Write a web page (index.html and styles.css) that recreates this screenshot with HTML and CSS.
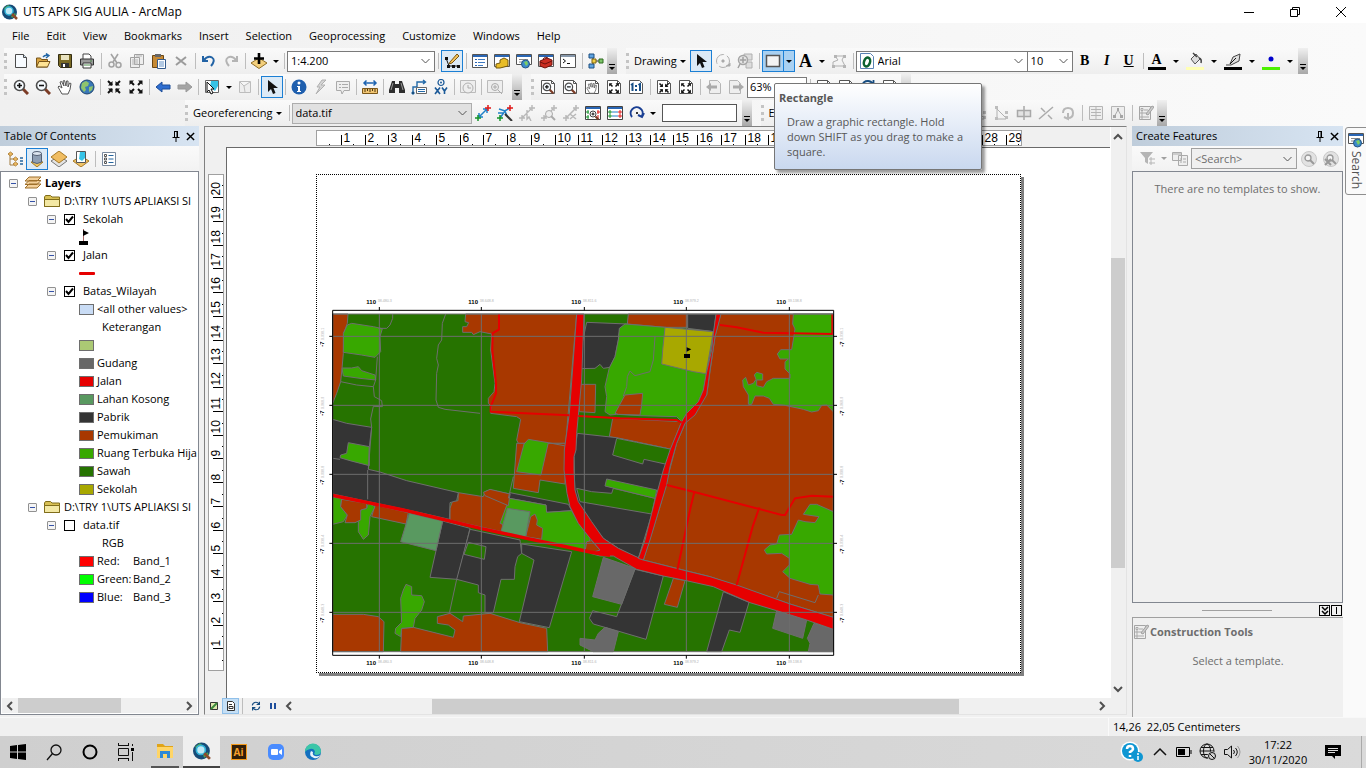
FILE: index.html
```
<!DOCTYPE html>
<html lang="en">
<head>
    <meta charset="UTF-8">
    <meta name="viewport" content="width=device-width, initial-scale=1.0">
    <title>UTS APK SIG AULIA - ArcMap</title>
    <link rel="stylesheet" href="styles.css">
</head>
<body>

    <!-- Icon sprite -->
    <svg class="sprite" aria-hidden="true">
        <symbol id="i-logo" viewBox="0 0 16 16"><circle cx="7.500" cy="8" r="7.500" fill="#174b77"/><path d="M2 4l4-3 3 2-2 3-4 1zM9 12l4-3 1 2-4 3z" fill="#4da04a"/><circle cx="7" cy="7" r="4" fill="#bfe8f5" stroke="#2fb3d8" stroke-width="1.500"/><path d="M10 10l5 5" stroke="#8d4a2a" stroke-width="2.500"/></symbol>
        <symbol id="i-new" viewBox="0 0 16 16"><path d="M2.500 1.500h8l3 3v10h-11z" fill="#f7fbff" stroke="#4a4a4a"/><path d="M10.500 1.500v3h3" fill="#cfe2f3" stroke="#4a4a4a"/></symbol>
        <symbol id="i-open" viewBox="0 0 16 16"><path d="M1.500 14V5h4l1 1.500h6V14z" fill="#d9a441" stroke="#77541a"/><path d="M1.500 14L4 8.500h11L12.500 14z" fill="#ffe394" stroke="#77541a"/><path d="M8 4q2-2.500 5-1.500M11 .500l3 2-3 2.500" fill="none" stroke="#2468a8" stroke-width="1.400"/></symbol>
        <symbol id="i-save" viewBox="0 0 16 16"><path d="M1.500 1.500h13v13h-11l-2-2z" fill="#7a6a24" stroke="#332d13"/><path d="M4 2h8v5H4z" fill="#e9e3c0"/><path d="M4 10h8v4H4z" fill="#333"/><path d="M6 11h2v3H6z" fill="#fff"/></symbol>
        <symbol id="i-print" viewBox="0 0 16 16"><path d="M4 6V1h6l2 2v3" fill="#fff" stroke="#444"/><path d="M1.500 6h13v6h-13z" fill="#999" stroke="#333"/><path d="M4 10h8v5H4z" fill="#fff" stroke="#333"/><path d="M5 12h6M11 8h2" stroke="#4b8a4b"/></symbol>
        <symbol id="i-cut" viewBox="0 0 16 16"><path d="M4 1l6 9M11 1L6 9" stroke="#a3a3a3" stroke-width="1.600" fill="none"/><circle cx="4.500" cy="11.500" r="2.500" fill="none" stroke="#a3a3a3" stroke-width="1.500"/><circle cx="11.500" cy="12" r="2.500" fill="none" stroke="#a3a3a3" stroke-width="1.500"/></symbol>
        <symbol id="i-copy" viewBox="0 0 16 16"><path d="M5.500 1.500h9v10h-9zM1.500 4.500h9v10h-9z" fill="#eee" stroke="#a0a0a0"/><path d="M3 7h6M3 9h6M3 11h6M7 3h6" stroke="#b5b5b5"/></symbol>
        <symbol id="i-paste" viewBox="0 0 16 16"><path d="M1.500 2.500h11v12h-11z" fill="#c68a35" stroke="#6b4613"/><path d="M4 1h6v3H4z" fill="#666"/><path d="M6.500 6.500h8v9h-8z" fill="#fff" stroke="#355b8c"/><path d="M8 9h5M8 11h5M8 13h5" stroke="#6793c6"/></symbol>
        <symbol id="i-delete" viewBox="0 0 16 16"><path d="M3 4l10 8M13 4L3 12" stroke="#9b9b9b" stroke-width="2"/></symbol>
        <symbol id="i-undo" viewBox="0 0 16 16"><path d="M2 3v5h5M2.500 7.500Q7 2 11 4.500T10 13" fill="none" stroke="#2263a5" stroke-width="2"/></symbol>
        <symbol id="i-redo" viewBox="0 0 16 16"><path d="M14 3v5H9M13.500 7.500Q9 2 5 4.500T6 13" fill="none" stroke="#b4b4b4" stroke-width="2"/></symbol>
        <symbol id="i-add" viewBox="0 0 16 16"><path d="M0 10l8-5 8 5-8 5.500z" fill="#f3cf7c" stroke="#8d6c25"/><path d="M8 0v11M3 5.500h10" stroke="#000" stroke-width="2.600"/></symbol>
        <symbol id="i-edit" viewBox="0 0 16 16"><path d="M2 5l3 8h9" fill="none" stroke="#111"/><path d="M1 4h3v3H1zM3 12h3v3H3zM8 12h3v3H8zM13 12h3v3h-3z" fill="#111"/><path d="M6 9l7-8 2 2-7 7-3 1z" fill="#f3c35b" stroke="#7a5412"/></symbol>
        <symbol id="i-toc" viewBox="0 0 16 16"><path d="M.500 1.500h15v13H.500z" fill="#fff" stroke="#555"/><path d="M1 2h14v2H1z" fill="#2a66b4"/><path d="M3 6.500h2M3 9.500h2M3 12.500h2" stroke="#2a66b4"/><path d="M6 6.500h7M6 9.500h7M6 12.500h5" stroke="#3d79c1"/></symbol>
        <symbol id="i-catalog" viewBox="0 0 16 16"><path d="M.500 1.500h15v12H.500z" fill="#fff" stroke="#555"/><path d="M1 2h14v2H1z" fill="#2a66b4"/><path d="M6 7l4-2 4 2v6l-8 2H2v-4l4-1z" fill="#e9bd27" stroke="#74580b"/></symbol>
        <symbol id="i-search" viewBox="0 0 16 16"><path d="M.500 1.500h15v10H.500z" fill="#fff" stroke="#555"/><path d="M1 2h14v2H1z" fill="#2a66b4"/><path d="M3 6.500h9M3 9h3" stroke="#888"/><circle cx="9.500" cy="11" r="4" fill="#3d8acb" stroke="#245685"/><path d="M8 9l3-1 1 3-2 2z" fill="#7dcf62"/></symbol>
        <symbol id="i-toolbox" viewBox="0 0 16 16"><path d="M.500 1.500h15v12H.500z" fill="#fff" stroke="#555"/><path d="M1 2h14v2H1z" fill="#2a66b4"/><path d="M2 8l7-3 5 2v5l-7 3-5-2z" fill="#cb2e22" stroke="#6e120c"/><path d="M5 6q2-3 5-1M2 9l5 2 7-3" fill="none" stroke="#6e120c"/></symbol>
        <symbol id="i-python" viewBox="0 0 16 16"><path d="M.500 1.500h15v13H.500z" fill="#fff" stroke="#555"/><path d="M1 2h14v2H1z" fill="#8697aa"/><path d="M3 6l2.500 2L3 10M7 10.500h3" fill="none" stroke="#111"/></symbol>
        <symbol id="i-model" viewBox="0 0 16 16"><path d="M5 3v10M5 8h6" stroke="#333"/><path d="M1 1h5v4H1zM1 11h5v4H1z" fill="#5ea3e0" stroke="#1d4f80"/><path d="M4 6h4v4H4z" fill="#f0cf44" stroke="#7a6211"/><path d="M11 6h4v4h-4z" fill="#7ec66a" stroke="#2f6a20"/></symbol>
        <symbol id="i-pointer" viewBox="0 0 16 16"><path d="M4 1v12l3-3 2 5 2.500-1-2-5H14z" fill="#111"/></symbol>
        <symbol id="i-rotate" viewBox="0 0 16 16"><circle cx="8" cy="8" r="6.500" fill="none" stroke="#b0b0b0" stroke-dasharray="14 3"/><path d="M7 7h2v2H7zM11 13h4v-3" fill="#aaa" stroke="#aaa"/></symbol>
        <symbol id="i-zoomsel" viewBox="0 0 16 16"><path d="M7 1h8v6H7zM9 9h6v6H9z" fill="#ddd" stroke="#b0b0b0"/><circle cx="6" cy="7" r="4.500" fill="#e5e5e5" stroke="#a5a5a5" stroke-width="1.500"/><path d="M6 4v6M3 7h6M3 11l-2 4" stroke="#a0a0a0" stroke-width="1.500"/></symbol>
        <symbol id="i-rect" viewBox="0 0 16 16"><path d="M1.500 2.500h13v11h-13z" fill="#f4f4f4" stroke="#555" stroke-width="1.500"/></symbol>
        <symbol id="i-vertex" viewBox="0 0 16 16"><path d="M2 13V9l5-2-3-4h9l-2 4 3 6z" fill="none" stroke="#b0b0b0"/><path d="M1 12h3v3H1zM3 2h3v3H3zM12 2h3v3h-3zM12 12h3v3h-3z" fill="#b5b5b5"/></symbol>
        <symbol id="i-zoomin" viewBox="0 0 16 16"><path d="M10 10l5 5" stroke="#7b3b25" stroke-width="3"/><circle cx="6.500" cy="6.500" r="5" fill="#f6fbff" stroke="#4c4c4c" stroke-width="1.600"/><path d="M6.500 4v5M4 6.500h5" stroke="#111" stroke-width="1.600"/></symbol>
        <symbol id="i-zoomout" viewBox="0 0 16 16"><path d="M10 10l5 5" stroke="#7b3b25" stroke-width="3"/><circle cx="6.500" cy="6.500" r="5" fill="#f6fbff" stroke="#4c4c4c" stroke-width="1.600"/><path d="M4 6.500h5" stroke="#111" stroke-width="1.600"/></symbol>
        <symbol id="i-hand" viewBox="0 0 16 16"><path d="M5 15L1 8l1-1 3 2-2-6 1.500-.500L7 7 6 2l1.500-.500L9 7l.500-5H11v6l1.500-4 1.500.500-1 6-2 4.500z" fill="#fff" stroke="#555"/></symbol>
        <symbol id="i-globe" viewBox="0 0 16 16"><circle cx="8" cy="8" r="7" fill="#3978b8" stroke="#1e436c"/><path d="M3 4l4-2 3 2-1 3-3 1 1 3-2 2-3-4zM10 8l4-1-1 4-3 2z" fill="#8fc46c"/></symbol>
        <symbol id="i-shrink" viewBox="0 0 16 16"><path d="M2 2l4 4M14 2l-4 4M2 14l4-4M14 14l-4-4" stroke="#111" stroke-width="2"/><path d="M2 6.500h4.500V2zM9.500 2v4.500H14zM6.500 14V9.500H2zM14 9.500H9.500V14z" fill="#111"/></symbol>
        <symbol id="i-grow" viewBox="0 0 16 16"><path d="M3 3l3 3M13 3l-3 3M3 13l3-3M13 13l-3-3" stroke="#111" stroke-width="2"/><path d="M1.500 6V1.500H6zM10 1.500h4.500V6zM1.500 10v4.500H6zM14.500 10v4.500H10z" fill="#111"/></symbol>
        <symbol id="i-back" viewBox="0 0 16 16"><path d="M1 8l6-5v3h8v4H7v3z" fill="#2f6ed0" stroke="#1c4c98"/></symbol>
        <symbol id="i-fwd" viewBox="0 0 16 16"><path d="M15 8L9 3v3H1v4h8v3z" fill="#a5a5a5" stroke="#999"/></symbol>
        <symbol id="i-select" viewBox="0 0 16 16"><path d="M1.500 1.500h13v12h-13z" fill="#fff" stroke="#666"/><path d="M7 2h7v5l-3 5-5-4z" fill="#37c3e6"/><path d="M3 3v10l2-2 2 4 2-1-2-4h3z" fill="#fff" stroke="#111"/></symbol>
        <symbol id="i-clearsel" viewBox="0 0 16 16"><path d="M2.500 2.500h11v11h-11zM3 3l4 4 6-4M7 7l1 6" fill="#eee" stroke="#bdbdbd"/></symbol>
        <symbol id="i-info" viewBox="0 0 16 16"><circle cx="8" cy="8" r="7.500" fill="#1f5fae"/><circle cx="8" cy="4" r="1.500" fill="#fff"/><path d="M6 7h3v5h1v1H6v-1h1V8H6z" fill="#fff"/></symbol>
        <symbol id="i-bolt" viewBox="0 0 16 16"><path d="M9 1L4 8h3l-4 7 9-9H8l5-5z" fill="#d5d5d5" stroke="#b0b0b0"/></symbol>
        <symbol id="i-note" viewBox="0 0 16 16"><path d="M1.500 2.500h13v9H9L7 15l-1-3.500H1.500z" fill="#eee" stroke="#aaa"/><path d="M4 5.500h2M7 5.500h6M4 8.500h2M7 8.500h6" stroke="#aaa"/></symbol>
        <symbol id="i-measure" viewBox="0 0 16 16"><path d="M2 4h12M4.500 1.500L2 4l2.500 2.500M11.500 1.500L14 4l-2.500 2.500" fill="none" stroke="#1e63b0" stroke-width="1.500"/><path d="M.500 9.500h15v5H.500z" fill="#f1c572" stroke="#7b571a"/><path d="M3 10v3M5.500 10v2M8 10v3M10.500 10v2M13 10v3" stroke="#4d360d"/></symbol>
        <symbol id="i-find" viewBox="0 0 16 16"><path d="M3 2h3v3h4V2h3l3 9v3H10V9H6v5H0v-3z" fill="#2e2e2e"/><path d="M4 4l-2 7M12 4l2 7" stroke="#999"/></symbol>
        <symbol id="i-route" viewBox="0 0 16 16"><path d="M2 15V8h4V3h8M12 1l2.500 2L12 5" fill="none" stroke="#2269a8" stroke-width="1.400"/><path d="M5.500 8.500h10v6h-10z" fill="#fff" stroke="#666"/><path d="M7 10.500h7M7 12.500h7M1 13h2v2H1z" stroke="#2269a8"/></symbol>
        <symbol id="i-xy" viewBox="0 0 16 16"><circle cx="8" cy="3.500" r="3" fill="none" stroke="#1c5a98" stroke-width="1.200"/><circle cx="8" cy="3.500" r="1" fill="#1c5a98"/><path d="M2 8.500l5 6.500M7 8.500L2 15M9 8.500l2.500 3.500L14 8.500M11.500 12v3" stroke="#1c5a98" stroke-width="1.600" fill="none"/></symbol>
        <symbol id="i-clock" viewBox="0 0 16 16"><path d="M.500 1.500h15v12H.500z" fill="#eee" stroke="#bbb"/><circle cx="8" cy="9" r="5" fill="#eee" stroke="#b0b0b0"/><path d="M8 6v3h3" fill="none" stroke="#aaa"/></symbol>
        <symbol id="i-viewer" viewBox="0 0 16 16"><path d="M.500 1.500h15v12H.500z" fill="#eee" stroke="#bbb"/><circle cx="8" cy="8" r="3.500" fill="#eee" stroke="#aaa"/><path d="M8 6v4M6 8h4M11 11l4 4" stroke="#aaa"/></symbol>
        <symbol id="i-page" viewBox="0 0 16 16"><path d="M1.500 1.500h10l3 3v10h-13z" fill="#fff" stroke="#555"/><path d="M11.500 1.500v3h3" fill="none" stroke="#555"/></symbol>
        <symbol id="i-pageprev" viewBox="0 0 16 16"><path d="M3.500 1.500h8l3 3v10h-11z" fill="#eee" stroke="#b5b5b5"/><path d="M0 8l5-4v2.500h6v3H5V12z" fill="#aaa"/></symbol>
        <symbol id="i-pagenext" viewBox="0 0 16 16"><path d="M1.500 1.500h8l3 3v10h-11z" fill="#eee" stroke="#b5b5b5"/><path d="M16 8l-5-4v2.500H5v3h6V12z" fill="#aaa"/></symbol>
        <symbol id="i-11" viewBox="0 0 16 16"><path d="M1.500 1.500h10l3 3v10h-13z" fill="#fff" stroke="#555"/><path d="M3 6l1.500-1v7M10.500 6L12 5v7" fill="none" stroke="#174f88" stroke-width="2"/><path d="M7 6h2v2H7zM7 10h2v2H7z" fill="#174f88"/></symbol>
        <symbol id="i-refresh" viewBox="0 0 16 16"><path d="M2 7q1-5 6-5 3 0 5 3M14 9q-1 5-6 5-3 0-5-3M13.500 1v4.500H9M2.500 15v-4.500H7" fill="none" stroke="#164c80" stroke-width="1.800"/></symbol>
        <symbol id="i-link" viewBox="0 0 16 16"><path d="M4 12l8-8M8 4h4v4M4 8v4h4" fill="none" stroke="#2180c8" stroke-width="1.500"/><path d="M13 0v6M10 3h6" stroke="#e01818" stroke-width="1.500"/><path d="M3 10v6M0 13h6" stroke="#14942a" stroke-width="1.500"/></symbol>
        <symbol id="i-autolink" viewBox="0 0 16 16"><path d="M2 4l6 2 5-3M3 13l5-7 2 5M1 8h5" fill="none" stroke="#2180c8" stroke-width="1.500"/><path d="M8 9l7 7" stroke="#333" stroke-width="2"/><path d="M13 0v6M10 3h6" stroke="#e01818" stroke-width="1.500"/><path d="M3 10v6M0 13h6" stroke="#14942a" stroke-width="1.500"/></symbol>
        <symbol id="i-linkoff" viewBox="0 0 16 16"><path d="M3 13l9-9M13 0v6M10 3h6M3 10v6M0 13h6M8 5v9l2-2 2 4" fill="none" stroke="#b8b8b8" stroke-width="1.400"/></symbol>
        <symbol id="i-linkzoom" viewBox="0 0 16 16"><path d="M3 13l9-9M13 0v6M10 3h6M3 10v6M0 13h6" stroke="#b8b8b8" stroke-width="1.400"/><circle cx="8" cy="9" r="3.500" fill="#eee" stroke="#aaa"/><path d="M10 11l4 4" stroke="#aaa" stroke-width="2"/></symbol>
        <symbol id="i-linkdel" viewBox="0 0 16 16"><path d="M3 13l9-9M13 0v6M10 3h6M3 10v6M0 13h6M7 9l6 5M13 9l-6 5" stroke="#b8b8b8" stroke-width="1.500"/></symbol>
        <symbol id="i-table" viewBox="0 0 16 16"><path d="M.500 1.500h15v13H.500z" fill="#fff" stroke="#444"/><path d="M1 2h14v2H1z" fill="#2a66b4"/><path d="M5 7h6M5 11h6" stroke="#2180c8"/><path d="M3 5v4M1 7h4M3 9v4M1 11h4" stroke="#14942a"/><path d="M13 5v4M11 7h4M13 9v4M11 11h4" stroke="#e01818"/></symbol>
        <symbol id="i-tablezoom" viewBox="0 0 16 16"><path d="M.500 1.500h15v13H.500z" fill="#fff" stroke="#444"/><path d="M1 2h14v2H1z" fill="#2a66b4"/><path d="M3 5v4M1 7h3M3 10v4M1 12h3" stroke="#14942a"/><path d="M13 5v4M12 7h3M13 10v3" stroke="#e01818"/><circle cx="8" cy="9" r="3" fill="#fff" stroke="#444"/><path d="M8 7.500v3M6.500 9h3" stroke="#111"/><path d="M10.500 11.500l3 3" stroke="#7b3b25" stroke-width="2"/></symbol>
        <symbol id="i-spin" viewBox="0 0 16 16"><path d="M3 12A6 6 0 1 1 13 11M15 8l-2 4-4-2" fill="none" stroke="#1a3f93" stroke-width="2"/><path d="M7 7h2v2H7z" fill="#333"/></symbol>
        <symbol id="i-trace" viewBox="0 0 16 16"><path d="M3 1v13h9M3 4l9 9" fill="none" stroke="#b0b0b0"/><path d="M1 1h3v3H1zM1 12h3v3H1zM11 6h3v3h-3zM11 11h3v3h-3z" fill="#bdbdbd"/></symbol>
        <symbol id="i-split" viewBox="0 0 16 16"><path d="M1.500 5.500h13v6h-13zM8 1v14" fill="#e2e2e2" stroke="#a8a8a8" stroke-width="1.500"/></symbol>
        <symbol id="i-cross" viewBox="0 0 16 16"><path d="M1 14L15 2M3 3l4 4M10 10l4 4" stroke="#ababab" stroke-width="1.500"/></symbol>
        <symbol id="i-turn" viewBox="0 0 16 16"><path d="M3 8q0-5 5-5t5 5-5 5M8 8v6l-4-2" fill="none" stroke="#b8b8b8" stroke-width="2"/></symbol>
        <symbol id="i-attr" viewBox="0 0 16 16"><path d="M1.500 1.500h13v13h-13zM8 2v12M3 4.500h10M3 7.500h10M3 10.500h10" fill="#eee" stroke="#b5b5b5"/></symbol>
        <symbol id="i-sketch" viewBox="0 0 16 16"><path d="M1.500 1.500h13v13h-13z" fill="#eee" stroke="#b5b5b5"/><path d="M4 12l4-7 4 7" fill="none" stroke="#aaa"/><path d="M7 3h2v3H7zM3 10h3v3H3zM10 10h3v3h-3z" fill="#a5a5a5"/></symbol>
        <symbol id="i-template" viewBox="0 0 16 16"><path d="M1.500 1.500h11v13h-11z" fill="#eee" stroke="#a5a5a5"/><path d="M3 3.500h2v2H3zM3 7h2v2H3zM3 11h2v2H3zM6 5h4M6 8h3M6 12h5" fill="none" stroke="#aaa"/><path d="M8 9l6-8 2 1-6 8z" fill="#ccc" stroke="#a0a0a0"/></symbol>
        <symbol id="i-style" viewBox="0 0 16 16"><path d="M1.500.500h10l3 3v12h-13z" fill="#fff" stroke="#5b83b4"/><ellipse cx="8" cy="9" rx="3" ry="4.500" fill="none" stroke="#0c6230" stroke-width="2.500" transform="rotate(18 8 9)"/></symbol>
        <symbol id="i-bucket" viewBox="0 0 16 16"><path d="M4 7l5-5 4 5-5 5z" fill="#ddd" stroke="#555"/><path d="M6 1l4 4M12 6q3 1 2 5" fill="none" stroke="#444" stroke-width="1.500"/></symbol>
        <symbol id="i-pen" viewBox="0 0 16 16"><path d="M1 13h5l8-4 1-7-7 3-3 7" fill="#ddd" stroke="#444"/><path d="M5 12l6-6" stroke="#111"/></symbol>
        <symbol id="i-source" viewBox="0 0 16 16"><path d="M3 3v11h5M3 8h5" fill="none" stroke="#a07b3f"/><path d="M1 3l2.500-2L6 3 3.500 5zM6 8l2.500-2L11 8l-2.500 2zM6 13l2.500-2 2.500 2-2.500 2z" fill="#edb95d" stroke="#b28541"/><path d="M13 7h3M13 10h3M13 13h3" stroke="#25659e" stroke-width="1.500"/></symbol>
        <symbol id="i-db" viewBox="0 0 16 16"><path d="M2 11h12l-6 5z" fill="#efc45e" stroke="#a07a29"/><path d="M3.500 2v9q4.500 3 9 0V2" fill="#8e9fb4" stroke="#536074"/><ellipse cx="8" cy="2.500" rx="4.500" ry="2" fill="#dce5ef" stroke="#536074"/></symbol>
        <symbol id="i-vis" viewBox="0 0 16 16"><path d="M0 10l8-5 8 5-8 6z" fill="#e3e3e3" stroke="#777"/><path d="M0 6l8-6 8 6-8 6z" fill="#f0bd62" stroke="#a77a27"/></symbol>
        <symbol id="i-bysel" viewBox="0 0 16 16"><path d="M0 10l8-5 8 5-8 6z" fill="#f0c468" stroke="#a77a27"/><path d="M3.500.500h9v11h-9z" fill="#fff" stroke="#555"/><path d="M7 1h5v6l-3 3-3-2z" fill="#37c3e6"/></symbol>
        <symbol id="i-options" viewBox="0 0 16 16"><path d="M1.500 1.500h13v13h-13z" fill="#fff" stroke="#7a8ba0"/><path d="M3.500 3.500h2v2h-2zM3.500 7h2v2h-2zM3.500 10.500h2v2h-2z" fill="none" stroke="#555"/><path d="M7.500 4.500h5M7.500 8h5M7.500 11.500h5" stroke="#25659e"/></symbol>
        <symbol id="i-layers" viewBox="0 0 16 16"><path d="M0 13l4-4h12l-4 4zM0 9.500l4-4h12l-4 4zM0 6l4-4h12l-4 4z" fill="#f2cf9a" stroke="#9d6f2b"/></symbol>
        <symbol id="i-folder" viewBox="0 0 16 16"><path d="M.500 13.500V4l1-1.500h5L8 4h7.500v9.500z" fill="#d8c055" stroke="#806d1a"/><path d="M.500 13.500v-7h15v7z" fill="#f3e8a4" stroke="#806d1a"/></symbol>
        <symbol id="i-filter" viewBox="0 0 16 16"><path d="M1 1h13L9 7v6l-3-2V7z" fill="#b5b5b5"/><path d="M11 7h2v2h-2zM11 11h2v2h-2zM14 8h2M14 12h2" stroke="#b5b5b5" fill="none"/></symbol>
        <symbol id="i-organize" viewBox="0 0 16 16"><path d="M.500 1.500h9v8h-9zM6.500 4.500h9v10h-9z" fill="#eee" stroke="#aaa"/><path d="M1 3h8M8 8h2M11 8h3M8 11h2M11 11h3" stroke="#aaa"/></symbol>
        <symbol id="i-find2" viewBox="0 0 16 16"><circle cx="8" cy="8" r="7.500" fill="#e2e2e2" stroke="#c8c8c8"/><circle cx="7" cy="7" r="3" fill="#f5f5f5" stroke="#999" stroke-width="1.300"/><path d="M9 9l4 4" stroke="#999" stroke-width="2"/></symbol>
        <symbol id="i-pin" viewBox="0 0 8 12"><path d="M2.500 1v6M2.500 1.500h3M5 1v6M.500 7.500h7M4 8v4" fill="none" stroke="#000"/><path d="M5 1h1v6H5z"/></symbol>
        <symbol id="i-x" viewBox="0 0 10 10"><path d="M1 1l8 8M9 1L1 9" stroke="currentColor" stroke-width="1.600"/></symbol>
        <symbol id="i-left" viewBox="0 0 10 10"><path d="M7 1L3 5l4 4" fill="none" stroke="#505050" stroke-width="2"/></symbol>
        <symbol id="i-right" viewBox="0 0 10 10"><path d="M3 1l4 4-4 4" fill="none" stroke="#505050" stroke-width="2"/></symbol>
        <symbol id="i-up" viewBox="0 0 10 10"><path d="M1 7l4-4 4 4" fill="none" stroke="#505050" stroke-width="2"/></symbol>
        <symbol id="i-down" viewBox="0 0 10 10"><path d="M1 3l4 4 4-4" fill="none" stroke="#505050" stroke-width="2"/></symbol>
    </svg>

    <!-- Title bar -->
    <header class="title-bar">
        <svg class="icon"><use href="#i-logo"/></svg>
        <h1>UTS APK SIG AULIA - ArcMap</h1>
        <div class="window-buttons">
            <button aria-label="Minimize"><svg width="12" height="12"><path d="M1 6.500h10" stroke="#000"/></svg></button>
            <button aria-label="Restore"><svg width="12" height="12"><path d="M1.500 3.500h7v7h-7zM3.500 3V1.500h7v7H9" fill="none" stroke="#000"/></svg></button>
            <button aria-label="Close"><svg width="12" height="12"><path d="M1 1l10 10M11 1L1 11" stroke="#000"/></svg></button>
        </div>
    </header>

    <nav class="menu-bar">
        <button>File</button><button>Edit</button><button>View</button><button>Bookmarks</button><button>Insert</button><button>Selection</button><button>Geoprocessing</button><button>Customize</button><button>Windows</button><button>Help</button>
    </nav>

    <!-- Toolbars -->
    <div class="toolbars">
        <div class="toolbar-row">
            <div class="toolbar">
                <span class="grip"></span>
                <button class="tool" aria-label="New"><svg class="icon"><use href="#i-new"/></svg></button>
                <button class="tool" aria-label="Open"><svg class="icon"><use href="#i-open"/></svg></button>
                <button class="tool" aria-label="Save"><svg class="icon"><use href="#i-save"/></svg></button>
                <button class="tool" aria-label="Print"><svg class="icon"><use href="#i-print"/></svg></button>
                <span class="sep"></span>
                <button class="tool" aria-label="Cut"><svg class="icon"><use href="#i-cut"/></svg></button>
                <button class="tool" aria-label="Copy"><svg class="icon"><use href="#i-copy"/></svg></button>
                <button class="tool" aria-label="Paste"><svg class="icon"><use href="#i-paste"/></svg></button>
                <button class="tool" aria-label="Delete"><svg class="icon"><use href="#i-delete"/></svg></button>
                <span class="sep"></span>
                <button class="tool" aria-label="Undo"><svg class="icon"><use href="#i-undo"/></svg></button>
                <button class="tool" aria-label="Redo"><svg class="icon"><use href="#i-redo"/></svg></button>
                <span class="sep"></span>
                <button class="tool" aria-label="Add Data"><svg class="icon"><use href="#i-add"/></svg></button>
                <button class="drop" aria-label="Add Data options"></button>
                <span class="sep"></span>
                <select class="combo scale" aria-label="Map scale"><option>1:4.200</option></select>
                <span class="sep"></span>
                <button class="tool active" aria-label="Editor Toolbar"><svg class="icon"><use href="#i-edit"/></svg></button>
                <span class="sep"></span>
                <button class="tool" aria-label="Table Of Contents"><svg class="icon"><use href="#i-toc"/></svg></button>
                <button class="tool" aria-label="Catalog"><svg class="icon"><use href="#i-catalog"/></svg></button>
                <button class="tool" aria-label="Search"><svg class="icon"><use href="#i-search"/></svg></button>
                <button class="tool" aria-label="ArcToolbox"><svg class="icon"><use href="#i-toolbox"/></svg></button>
                <button class="tool" aria-label="Python"><svg class="icon"><use href="#i-python"/></svg></button>
                <span class="sep"></span>
                <button class="tool" aria-label="ModelBuilder"><svg class="icon"><use href="#i-model"/></svg></button>
                <button class="overflow" aria-label="Toolbar options"></button>
            </div>
            <div class="toolbar">
                <span class="grip"></span>
                <button class="text-tool">Drawing</button>
                <button class="tool active" aria-label="Select Elements"><svg class="icon"><use href="#i-pointer"/></svg></button>
                <button class="tool" aria-label="Rotate"><svg class="icon"><use href="#i-rotate"/></svg></button>
                <button class="tool" aria-label="Zoom To Selected"><svg class="icon"><use href="#i-zoomsel"/></svg></button>
                <span class="sep"></span>
                <button class="tool active pressed" aria-label="Rectangle"><svg class="icon"><use href="#i-rect"/></svg></button>
                <button class="drop active pressed" aria-label="Shapes"></button>
                <button class="tool serif">A</button>
                <button class="drop" aria-label="Text options"></button>
                <button class="tool" aria-label="Edit Vertices"><svg class="icon"><use href="#i-vertex"/></svg></button>
                <span class="sep"></span>
                <div class="font-box">
                    <svg class="icon"><use href="#i-style"/></svg>
                    <select class="combo" aria-label="Font"><option>Arial</option></select>
                </div>
                <select class="combo size" aria-label="Font size"><option>10</option></select>
                <button class="tool letter">B</button>
                <button class="tool letter italic">I</button>
                <button class="tool letter underline">U</button>
                <span class="sep"></span>
                <button class="tool color black">A</button>
                <button class="drop wide" aria-label="Font color"></button>
                <button class="tool color yellow" aria-label="Fill color"><svg class="icon"><use href="#i-bucket"/></svg></button>
                <button class="drop wide" aria-label="Fill colors"></button>
                <button class="tool color black" aria-label="Line color"><svg class="icon"><use href="#i-pen"/></svg></button>
                <button class="drop wide" aria-label="Line colors"></button>
                <button class="tool color green" aria-label="Marker color"><svg class="icon" viewBox="0 0 16 16"><circle cx="8" cy="7" r="2.500" fill="#00c"/></svg></button>
                <button class="drop wide" aria-label="Marker colors"></button>
                <button class="overflow" aria-label="Toolbar options"></button>
            </div>
        </div>

        <div class="toolbar-row">
            <div class="toolbar tools">
                <span class="grip"></span>
                <button class="tool" aria-label="Zoom In"><svg class="icon"><use href="#i-zoomin"/></svg></button>
                <button class="tool" aria-label="Zoom Out"><svg class="icon"><use href="#i-zoomout"/></svg></button>
                <button class="tool" aria-label="Pan"><svg class="icon"><use href="#i-hand"/></svg></button>
                <button class="tool" aria-label="Full Extent"><svg class="icon"><use href="#i-globe"/></svg></button>
                <span class="sep"></span>
                <button class="tool" aria-label="Fixed Zoom In"><svg class="icon"><use href="#i-shrink"/></svg></button>
                <button class="tool" aria-label="Fixed Zoom Out"><svg class="icon"><use href="#i-grow"/></svg></button>
                <span class="sep"></span>
                <button class="tool" aria-label="Back"><svg class="icon"><use href="#i-back"/></svg></button>
                <button class="tool" aria-label="Forward"><svg class="icon"><use href="#i-fwd"/></svg></button>
                <span class="sep"></span>
                <button class="tool" aria-label="Select Features"><svg class="icon"><use href="#i-select"/></svg></button>
                <button class="drop" aria-label="Select options"></button>
                <button class="tool" aria-label="Clear Selection"><svg class="icon"><use href="#i-clearsel"/></svg></button>
                <span class="sep"></span>
                <button class="tool active" aria-label="Select Elements"><svg class="icon"><use href="#i-pointer"/></svg></button>
                <span class="sep"></span>
                <button class="tool" aria-label="Identify"><svg class="icon"><use href="#i-info"/></svg></button>
                <button class="tool" aria-label="Hyperlink"><svg class="icon"><use href="#i-bolt"/></svg></button>
                <button class="tool" aria-label="HTML Popup"><svg class="icon"><use href="#i-note"/></svg></button>
                <span class="sep"></span>
                <button class="tool" aria-label="Measure"><svg class="icon"><use href="#i-measure"/></svg></button>
                <span class="sep"></span>
                <button class="tool" aria-label="Find"><svg class="icon"><use href="#i-find"/></svg></button>
                <button class="tool" aria-label="Find Route"><svg class="icon"><use href="#i-route"/></svg></button>
                <button class="tool" aria-label="Go To XY"><svg class="icon"><use href="#i-xy"/></svg></button>
                <span class="sep"></span>
                <button class="tool" aria-label="Time Slider"><svg class="icon"><use href="#i-clock"/></svg></button>
                <span class="sep"></span>
                <button class="tool" aria-label="Viewer"><svg class="icon"><use href="#i-viewer"/></svg></button>
                <button class="overflow" aria-label="Toolbar options"></button>
            </div>
            <div class="toolbar">
                <span class="grip"></span>
                <button class="tool page" aria-label="Layout Zoom In"><svg class="icon"><use href="#i-page"/><use href="#i-zoomin"/></svg></button>
                <button class="tool page" aria-label="Layout Zoom Out"><svg class="icon"><use href="#i-page"/><use href="#i-zoomout"/></svg></button>
                <button class="tool page" aria-label="Layout Pan"><svg class="icon"><use href="#i-page"/><use href="#i-hand"/></svg></button>
                <button class="tool page" aria-label="Whole Page"><svg class="icon"><use href="#i-page"/><use href="#i-grow"/></svg></button>
                <button class="tool page" aria-label="Zoom 100%"><svg class="icon"><use href="#i-11"/></svg></button>
                <span class="sep"></span>
                <button class="tool page" aria-label="Page Fixed Zoom In"><svg class="icon"><use href="#i-page"/><use href="#i-shrink"/></svg></button>
                <button class="tool page" aria-label="Page Fixed Zoom Out"><svg class="icon"><use href="#i-page"/><use href="#i-grow"/></svg></button>
                <span class="sep"></span>
                <button class="tool" aria-label="Previous Page Extent"><svg class="icon"><use href="#i-pageprev"/></svg></button>
                <button class="tool" aria-label="Next Page Extent"><svg class="icon"><use href="#i-pagenext"/></svg></button>
                <select class="combo percent" aria-label="Page zoom"><option>63%</option></select>
                <span class="sep"></span>
                <button class="tool" aria-label="Draft Mode"><svg class="icon"><use href="#i-page"/></svg></button>
                <button class="tool" aria-label="Focus Data Frame"><svg class="icon"><use href="#i-page"/></svg></button>
                <button class="tool" aria-label="Change Layout"><svg class="icon"><use href="#i-refresh"/></svg></button>
                <button class="tool" aria-label="Data Driven Pages"><svg class="icon"><use href="#i-page"/></svg></button>
                <button class="overflow" aria-label="Toolbar options"></button>
            </div>
        </div>

        <div class="toolbar-row georef-row">
            <div class="toolbar">
                <span class="grip"></span>
                <button class="text-tool">Georeferencing</button>
                <span class="sep"></span>
                <select class="combo raster" aria-label="Georeferenced layer"><option>data.tif</option></select>
                <button class="tool" aria-label="Add Control Points"><svg class="icon"><use href="#i-link"/></svg></button>
                <button class="tool" aria-label="Auto Registration"><svg class="icon"><use href="#i-autolink"/></svg></button>
                <button class="tool" aria-label="Select Link"><svg class="icon"><use href="#i-linkoff"/></svg></button>
                <button class="tool" aria-label="Zoom To Link"><svg class="icon"><use href="#i-linkzoom"/></svg></button>
                <button class="tool" aria-label="Delete Link"><svg class="icon"><use href="#i-linkdel"/></svg></button>
                <button class="tool" aria-label="Viewer"><svg class="icon"><use href="#i-tablezoom"/></svg></button>
                <button class="tool" aria-label="View Link Table"><svg class="icon"><use href="#i-table"/></svg></button>
                <button class="tool" aria-label="Rotate"><svg class="icon"><use href="#i-spin"/></svg></button>
                <button class="drop" aria-label="Rotate options"></button>
                <input class="angle" type="text" aria-label="Rotation">
                <button class="overflow" aria-label="Toolbar options"></button>
            </div>
            <div class="toolbar">
                <span class="grip"></span>
                <button class="text-tool editor">Editor</button>
                <button class="tool" aria-label="Trace"><svg class="icon"><use href="#i-trace"/></svg></button>
                <button class="tool" aria-label="Reshape"><svg class="icon"><use href="#i-trace"/></svg></button>
                <button class="tool" aria-label="Cut Polygons"><svg class="icon"><use href="#i-split"/></svg></button>
                <button class="tool" aria-label="Split"><svg class="icon"><use href="#i-cross"/></svg></button>
                <button class="tool" aria-label="Rotate"><svg class="icon"><use href="#i-turn"/></svg></button>
                <span class="sep"></span>
                <button class="tool" aria-label="Attributes"><svg class="icon"><use href="#i-attr"/></svg></button>
                <button class="tool" aria-label="Sketch Properties"><svg class="icon"><use href="#i-sketch"/></svg></button>
                <span class="sep"></span>
                <button class="tool" aria-label="Create Features"><svg class="icon"><use href="#i-template"/></svg></button>
                <button class="overflow" aria-label="Toolbar options"></button>
            </div>
        </div>
    </div>

    <main class="workspace">
        <!-- Table of contents -->
        <aside class="toc">
            <div class="panel-title">
                <h2>Table Of Contents</h2>
                <button aria-label="Auto hide"><svg width="8" height="12"><use href="#i-pin"/></svg></button>
                <button aria-label="Close"><svg width="9" height="9"><use href="#i-x"/></svg></button>
            </div>
            <div class="panel-tools">
                <button class="tool" aria-label="List By Drawing Order"><svg class="icon"><use href="#i-source"/></svg></button>
                <button class="tool active" aria-label="List By Source"><svg class="icon"><use href="#i-db"/></svg></button>
                <button class="tool" aria-label="List By Visibility"><svg class="icon"><use href="#i-vis"/></svg></button>
                <button class="tool" aria-label="List By Selection"><svg class="icon"><use href="#i-bysel"/></svg></button>
                <span class="sep"></span>
                <button class="tool" aria-label="Options"><svg class="icon"><use href="#i-options"/></svg></button>
            </div>
            <div class="tree-box">
                <ul class="tree">
                    <li class="level-0"><button class="minus" aria-label="Collapse"></button><svg class="icon"><use href="#i-layers"/></svg><b>Layers</b></li>
                    <li class="level-1"><button class="minus" aria-label="Collapse"></button><svg class="icon"><use href="#i-folder"/></svg><span>D:\TRY 1\UTS APLIAKSI SI</span></li>
                    <li class="level-2"><button class="minus" aria-label="Collapse"></button><input type="checkbox" id="l1" checked><label for="l1">Sekolah</label></li>
                    <li class="level-3"><svg width="14" height="16"><path d="M4.500 0v13" stroke="#a66"/><path d="M4 1l6 3-6 3zM0 12h9v4H0z"/></svg></li>
                    <li class="level-2"><button class="minus" aria-label="Collapse"></button><input type="checkbox" id="l2" checked><label for="l2">Jalan</label></li>
                    <li class="level-3"><span class="line-symbol"></span></li>
                    <li class="level-2"><button class="minus" aria-label="Collapse"></button><input type="checkbox" id="l3" checked><label for="l3">Batas_Wilayah</label></li>
                    <li class="level-3"><i class="swatch other"></i>&lt;all other values&gt;</li>
                    <li class="level-4">Keterangan</li>
                    <li class="level-3"><i class="swatch blank"></i></li>
                    <li class="level-3"><i class="swatch gudang"></i>Gudang</li>
                    <li class="level-3"><i class="swatch jalan"></i>Jalan</li>
                    <li class="level-3"><i class="swatch lahan"></i>Lahan Kosong</li>
                    <li class="level-3"><i class="swatch pabrik"></i>Pabrik</li>
                    <li class="level-3"><i class="swatch pemukiman"></i>Pemukiman</li>
                    <li class="level-3"><i class="swatch rth"></i>Ruang Terbuka Hija</li>
                    <li class="level-3"><i class="swatch sawah"></i>Sawah</li>
                    <li class="level-3"><i class="swatch sekolah"></i>Sekolah</li>
                    <li class="level-1"><button class="minus" aria-label="Collapse"></button><svg class="icon"><use href="#i-folder"/></svg><span>D:\TRY 1\UTS APLIAKSI SI</span></li>
                    <li class="level-2"><button class="minus" aria-label="Collapse"></button><input type="checkbox" id="l4"><label for="l4">data.tif</label></li>
                    <li class="level-4">RGB</li>
                    <li class="level-3"><i class="swatch red"></i><span class="band">Red:</span>Band_1</li>
                    <li class="level-3"><i class="swatch lime"></i><span class="band">Green:</span>Band_2</li>
                    <li class="level-3"><i class="swatch blue"></i><span class="band">Blue:</span>Band_3</li>
                </ul>
                <div class="h-scroll">
                    <button aria-label="Scroll left"><svg width="10" height="10"><use href="#i-left"/></svg></button>
                    <div class="track"><div class="thumb"></div></div>
                    <button aria-label="Scroll right"><svg width="10" height="10"><use href="#i-right"/></svg></button>
                </div>
            </div>
        </aside>

        <!-- Layout view -->
        <section class="layout-view">
            <div class="ruler-top"><svg id="rulerTop" width="706" height="16"></svg></div>
            <div class="ruler-left"><svg id="rulerLeft" width="16" height="497"></svg></div>
            <div class="canvas">
                <div class="paper">
                    <svg class="map" viewBox="0 0 1590 1140">
                        <rect x="38" y="72" width="1502" height="1013" fill="#267300"/>
                        <g stroke="#6e6e6e" stroke-width="3" stroke-linejoin="round">
                            <g class="pemukiman">
                                <path d="M38 72H84L82 100 71 130 70 190 66 235 62 275 50 310 38 340z"/>
                                <path d="M437 72l-2 23 11 3-6 12h-12v17h27l5 7 20-9 35 7-3 48 13 100-3 25-17 20v15l10 10-3 20 78 10 12 8-12 62 5 10H737L770 72z"/>
                                <path d="M590 460H737L735 582 660 570 655 608 580 595z"/>
                                <path d="M415 608l75 12 5-15 15-5 60 12-25 113-155-35v-35l7-20 17-3z"/>
                                <path d="M165 645l100 23-7 34-103-22z"/>
                                <path d="M38 973h92l45 7 17 15-2 90H38z"/>
                                <path d="M242 1085l3-70 35-3 120 30 5-22-20-15-33-5v-20l38-10 38 25 2-17 80-8 90 28 80 17 3 70z"/>
                                <path d="M925 72h180l-2 40h-68l-113-10z"/>
                                <path d="M780 283h47l-2 85-47-3z"/>
                                <path d="M878 385l207 10-33 83-72-15-60-13-52-10z"/>
                                <path d="M1202 72H1540V982L1410 942 1170 860 970 810 1020 650 1070 460 1095 400 1160 315 1185 140z"/>
                                <path d="M1060 865l35 7-23 80-39-9z"/>
                            </g>
                            <g class="pabrik">
                                <path d="M38 388l42 12 75 12-10 126 35 8 80 26 155 36-5 24-20 6-2 50-88-20L38 612z"/>
                                <path d="M368 693l82 22-38 153-82-6 18-80z"/>
                                <path d="M450 718l150 32 5 40-12 10-8 30-2 38h-40l-23 100h-25v-53l-20-7v-23l-65-17z"/>
                                <path d="M605 762l150 23-67 228-90-18 44-185-37-20z"/>
                                <path d="M570 608l175 35 10 19-75 5-2-22-110-20z"/>
                                <path d="M800 97l122 5-22 13-5 35-10 50-15 32-20 3-10-12-15 12-55 1z"/>
                                <path d="M1103 72h85l-6 53-79-10z"/>
                                <path d="M772 430l118 13 165 35-100 327-60-30-45-30-85-110-3-135z"/>
                                <path d="M945 838l85 20-52 190-78-23-80-23-12-17 10-23 72 18z"/>
                                <path d="M1210 905l77 32-27 90-32-7-23 65h-45z"/>
                            </g>
                            <g class="sawah">
                                <path d="M445 757l53 13-5 38-61-15z"/>
                                <path d="M890 445l60 12 105 21-15 45-68-15-4 14-90-27z"/>
                                <path d="M770 595l45 10 60 5 5-15 125 30-10 47-215-37z"/>
                            </g>
                            <g class="rth">
                                <path d="M82 105l13-5 65 10 27 6-7 24 2 45-17 17-40-7-55-8V130z"/>
                                <path d="M66 234h29l20-4 10 12 40 13 2 15-47-5-50-7z"/>
                                <path d="M85 458l63 12v57l-58-15-30-9 2-8 18-5z"/>
                                <path d="M612 462l13-14 60 10-22 97-73-10z"/>
                                <path d="M38 622l27 3-3 25 20 25-12 20-32 8z"/>
                                <path d="M145 640l20 10-15 30-5 55-15 13-15-23v-30l7-35 18-5z"/>
                                <path d="M258 883l17 7v25l30 2 8 18-8 25-20 25-5 27-35 3-3 25-17-10 2-15 18-18-3-72 8-25z"/>
                                <path d="M568 625l110 20 2 22 75-5 20 38 35 45-8 37-142-32-120-50z"/>
                                <path d="M898 115l17-13 120 10 147 13-24 130-8 45-15 35-35 35-15 25-15-15-110-3-70-4-20 2-15-10 5-45-5-30 13-57 17-33 10-50z"/>
                                <path d="M860 567l150 33-5 25-150-37z"/>
                                <path d="M1420 72h120v293l-20-20-15 1-10 16-20 4-25-8-60-13-30-2-12-18-18-7h-25l-10 25h-10v-28l-15-25-2-20 9-8 8 23 15-5 8-12-5-13 7-8 18 5v18h-18v17l20 5 10-17 20-10h50v-13l-15-15v-22l10-8h-25l-8-15 10-13h33l7-42 3-20-7-15z"/>
                                <path d="M1470 643h20l50 22v250l-40-3-5-27-25-2-60-18-22-20 20-20v-20l-23-15-45 2-7-12 17-15 20-3 8-27 37-2 20-43 20 5 30 3 12-18-47-7z"/>
                            </g>
                            <g class="pemukiman">
                                <path d="M65 628l75 12v15l-18 5v30l-17 8H75l7-23-20-25z"/>
                                <path d="M495 617l-5-10 20-9 60 14-5 35z"/>
                                <path d="M632 680l13-8 7 18-2 15 18 10-3 33-48-8z"/>
                                <path d="M915 315l53-5-3 35-5 30-65-2-10-3z"/>
                                <path d="M795 785l5-30 15-3 25 28-2 12z"/>
                            </g>
                            <g class="lahan">
                                <path d="M268 670l100 23-20 89-106-27z"/>
                                <path d="M562 655l68 10-13 75-74-15z"/>
                            </g>
                            <path class="sekolah" d="M1035 112l145 13-22 126-38-6-95-23 3-42z"/>
                            <g class="gudang">
                                <path d="M850 802l95 33-40 108-87-23z"/>
                                <path d="M780 1045l45 5 10-20 20-18 40 13-15 60h-60l-40-20z"/>
                                <path d="M1370 962l90 28-12 55-90-30z"/>
                                <path d="M1482 1000l58 18v67h-75l5-25-8-15z"/>
                            </g>
                            <!-- parcel boundaries -->
                            <g fill="none">
                                <path d="M218 72v13l-8 20-10 10h-25M172 200l-5 70-7 20 3 30 22 12 2 18-27-1-8 38 3 25-7 58-3 68M62 275l48 10 50 5M38 505l22 3M143 540v88"/>
                                <path d="M377 72l-10 28-2 50-10 15-5 40 5 20-5 25-2 80 7 22 20 6 105 12M410 868l-22 102M580 560l-15 65"/>
                                <path d="M1005 140l-5 70-10 35-45 12-15-14-8 17-2 30-10 28M1370 925l8-20 107 33 10-23M685 458l52 10"/>
                            </g>
                            <!-- roads -->
                            <path class="jalan" d="M770 72H792L785 270 770 430 768 480 762 500V540L765 600 775 635 815 695 850 745 895 775 970 810 1100 843 1170 860 1250 885 1410 942 1540 982V1018L1460 990 1370 962 1290 938 1210 903 1180 890 1090 870 1030 858 950 838 880 798H840L810 790 840 780 810 745 775 700 750 650 741 610 732 540 733 480 748 370z"/>
                            <path class="jalan" d="M1188 72H1203L1185 140 1170 240 1160 315 1125 375 1095 400 1070 460 1050 530 1040 585 1020 650 990 750 970 810 955 805 975 750 995 670 1005 630 1030 540 1050 480 1085 395 1100 370 1135 335 1150 300 1158 255 1175 180 1180 130z"/>
                        </g>
                        <g fill="none" stroke="#e60000" stroke-width="6">
                            <path stroke-width="10" d="M38 616l212 44 235 56 135 29 80 17 110 24 60 10"/>
                            <path d="M537 72v46l-19 12-1 50 11 100v30l-16 40v15l236 11M775 378l125 7 170 5 15 8"/>
                            <path d="M1200 105l50 7 80 16 210 4M1537 72v60M1040 585l80 20 265 70h10l30-50 50-8 65 3M1123 605l-13 55-38 180M1318 652l-20 58-48 175"/>
                        </g>
                        <!-- graticule -->
                        <g class="graticule">
                            <path d="M38 72H1540V1085H38z"/>
                            <path d="M178 72v1013M484 72v1013M793 72v1013M1099 72v1013M1408 72v1013M38 139h1502M38 346h1502M38 553h1502M38 760h1502M38 967h1502"/>
                        </g>
                        <path d="M38 61H1541V1096H38z" fill="none" stroke="#000" stroke-width="3"/>
                        <path d="M178 51v10M484 51v10M793 51v10M1099 51v10M1408 51v10M178 1096v10M484 1096v10M793 1096v10M1099 1096v10M1408 1096v10M28 139h10M28 346h10M28 553h10M28 760h10M28 967h10M1541 139h10M1541 346h10M1541 553h10M1541 760h10M1541 967h10" stroke="#000" stroke-width="3"/>
                        <path d="M1100 172l14 6-14 7zM1092 192h18v12h-18z"/>
                        <g id="mapLabels"></g>
                    </svg>
                </div>
            </div>
            <div class="v-scroll">
                <button aria-label="Scroll up"><svg width="10" height="10"><use href="#i-up"/></svg></button>
                <div class="track"><div class="thumb"></div></div>
                <button aria-label="Scroll down"><svg width="10" height="10"><use href="#i-down"/></svg></button>
            </div>
            <div class="view-bar">
                <button class="view" aria-label="Data View"><svg width="10" height="10"><path d="M1.500 1.500h7v7h-7z" fill="#dfe8b0" stroke="#333"/><path d="M2 8l6-6" stroke="#3a8a3a" stroke-width="2"/></svg></button>
                <button class="view active" aria-label="Layout View"><svg width="10" height="10"><path d="M1.500.500h5l2 2v7h-7zM3 3.500h3M3 5.500h4v2H3z" fill="#fff" stroke="#333"/></svg></button>
                <span class="sep"></span>
                <button class="view" aria-label="Refresh"><svg width="10" height="10"><use href="#i-refresh"/></svg></button>
                <button class="view" aria-label="Pause Drawing"><svg width="8" height="8"><path d="M1 1h2v6H1zM5 1h2v6H5z" fill="#1e4e9c"/></svg></button>
                <div class="h-scroll">
                    <button aria-label="Scroll left"><svg width="10" height="10"><use href="#i-left"/></svg></button>
                    <div class="track"><div class="thumb"></div></div>
                    <button aria-label="Scroll right"><svg width="10" height="10"><use href="#i-right"/></svg></button>
                </div>
            </div>
        </section>

        <!-- Create features -->
        <aside class="features">
            <div class="panel-title">
                <h2>Create Features</h2>
                <button aria-label="Auto hide"><svg width="8" height="12"><use href="#i-pin"/></svg></button>
                <button aria-label="Close"><svg width="9" height="9"><use href="#i-x"/></svg></button>
            </div>
            <div class="panel-tools">
                <button class="tool" aria-label="Filter"><svg class="icon"><use href="#i-filter"/></svg></button>
                <button class="drop gray" aria-label="Filter options"></button>
                <button class="tool" aria-label="Organize Templates"><svg class="icon"><use href="#i-organize"/></svg></button>
                <select class="combo template-search" aria-label="Search templates"><option>&lt;Search&gt;</option></select>
                <button class="tool" aria-label="Find"><svg class="icon"><use href="#i-find2"/></svg></button>
                <button class="tool" aria-label="Clear"><svg class="icon"><use href="#i-find2"/><path d="M2 8l6 6M8 8l-6 6" stroke="#999" stroke-width="2"/></svg></button>
            </div>
            <div class="template-box">There are no templates to show.</div>
            <div class="splitter">
                <hr>
                <button aria-label="Collapse"><svg width="9" height="9"><path d="M2 1l3 3 3-3M2 5l3 3 3-3" fill="none" stroke="#000" stroke-width="1.500"/></svg></button>
                <button aria-label="Restore"><svg width="9" height="9"><path d="M4.500 1v7" stroke="#000"/></svg></button>
            </div>
            <div class="construction">
                <h3><svg class="icon"><use href="#i-template"/></svg>Construction Tools</h3>
                <p>Select a template.</p>
            </div>
        </aside>

        <div class="dock">
            <button><svg class="icon"><use href="#i-search"/></svg><span>Search</span></button>
        </div>
    </main>

    <footer class="status-bar">
        <span class="message"></span>
        <span class="position">14,26&nbsp; 22,05 Centimeters</span>
    </footer>

    <!-- Windows taskbar -->
    <div class="taskbar">
        <button aria-label="Start"><svg width="18" height="18"><path d="M1 3l7-1v6.500H1zM9 2l8-1v7.500H9zM1 9.500h7V16l-7-1zM9 9.500h8V17l-8-1z"/></svg></button>
        <button aria-label="Search"><svg width="18" height="18"><circle cx="11" cy="7" r="5" fill="none" stroke="#111" stroke-width="1.300"/><path d="M7.500 10.500L2 17" stroke="#111" stroke-width="1.300"/></svg></button>
        <button aria-label="Cortana"><svg width="18" height="18"><circle cx="9" cy="9" r="6.500" fill="none" stroke="#000" stroke-width="2"/></svg></button>
        <button aria-label="Task View"><svg width="18" height="18"><path d="M1 2.500h11M1 15.500h11M1.500 0v3M11.500 0v3M1.500 15v3M11.500 15v3M1.500 5.500h10v7h-10zM15.500 1v2M15.500 9v9" fill="none" stroke="#111"/><path d="M14 5h3v3h-3z"/></svg></button>
        <button class="running" aria-label="File Explorer"><svg width="18" height="18"><path d="M1 2h6l2 2h8v3H1z" fill="#e0a419"/><path d="M1 5h16v11H1z" fill="#ffd567"/><path d="M4 16V9h10v7h-3v-4H7v4z" fill="#2f89d6"/></svg></button>
        <button class="current" aria-label="ArcMap"><svg width="18" height="18"><use href="#i-logo"/></svg></button>
        <button class="ai" aria-label="Illustrator"><span>Ai</span></button>
        <button aria-label="Zoom"><svg width="18" height="18"><rect x="1" y="1" width="16" height="16" rx="5" fill="#4a8cff"/><rect x="4" y="6" width="7" height="6" rx="1" fill="#fff"/><path d="M12 8l3-2v6l-3-2z" fill="#fff"/></svg></button>
        <button aria-label="Edge"><svg width="18" height="18"><circle cx="9" cy="9" r="8" fill="#1470bf"/><path d="M1 9a8 8 0 0 1 16-1q0 4-5 4-3-1-1-3-1-4-5-3t-5 3z" fill="#3cc6a8"/><path d="M7 8q-3 5 3 7 4 1 6-3-2 2-5 1t-2-4z" fill="#e8f4fb"/></svg></button>
        <div class="tray">
            <button class="help" aria-label="Help"><svg width="24" height="22"><circle cx="10" cy="10" r="9.500" fill="#fff"/><circle cx="10" cy="10" r="8" fill="#0f96d2"/><path d="M7 8q0-3 3-3t3 3q0 1-3 3v1M10 14v2" fill="none" stroke="#fff" stroke-width="2.500"/><circle cx="18" cy="16" r="5" fill="#0f96d2"/><path d="M18 15v4M18 12v2" stroke="#fff" stroke-width="1.500"/></svg></button>
            <button aria-label="Hidden icons"><svg width="14" height="10"><path d="M1 8l6-6 6 6" fill="none" stroke="#111" stroke-width="1.500"/></svg></button>
            <button aria-label="Battery"><svg width="16" height="10"><path d="M.500.500h13v9H.500zM15 3v4" fill="none" stroke="#000"/><path d="M2 2h7v6H2z"/></svg></button>
            <button aria-label="Network"><svg width="18" height="18"><circle cx="8" cy="8" r="7" fill="none" stroke="#111"/><ellipse cx="8" cy="8" rx="3.500" ry="7" fill="none" stroke="#111"/><path d="M1 8h14M2 4.500h12M2 11.500h7" stroke="#111"/><circle cx="13" cy="13" r="4.500" fill="#d4d4d4"/><circle cx="13" cy="13" r="3.500" fill="none" stroke="#111"/><path d="M10.500 10.500l5 5" stroke="#111"/></svg></button>
            <button aria-label="Volume"><svg width="18" height="14"><path d="M1.500 4.500h3l4-3.500v12l-4-3.500h-3z" fill="none" stroke="#111"/><path d="M10.500 5q2 2 0 4M12.500 3q3.500 4 0 8" fill="none" stroke="#111"/><path d="M14.500 1q5 6 0 12" fill="none" stroke="#999"/></svg></button>
            <time class="clock"><span>17:22</span><span>30/11/2020</span></time>
            <button class="notify" aria-label="Notifications"><svg width="16" height="16"><path d="M0 1h16v11h-6v3l-3-3H0z"/><path d="M3 4.500h10M3 6.500h10M3 8.500h7" stroke="#ddd"/></svg></button>
        </div>
    </div>

    <!-- Tooltip of the rectangle tool -->
    <div class="tooltip" role="tooltip">
        <strong>Rectangle</strong>
        <p>Draw a graphic rectangle. Hold down SHIFT as you drag to make a square.</p>
    </div>

    <script>
        (function() {
            const NS = 'http://www.w3.org/2000/svg';
            const CM = 23.75; // screen pixels in one page centimetre

            function add(parent, name, attrs, text) {
                const el = document.createElementNS(NS, name);
                Object.keys(attrs).forEach(key => el.setAttribute(key, attrs[key]));
                if (text) {
                    el.textContent = text;
                }
                parent.appendChild(el);
            }

            // Page rulers
            const top = document.getElementById('rulerTop');
            for (let n = 0; n <= 29; n++) {
                const x = Math.round(n * CM) + 0.5;
                if (n > 0) {
                    add(top, 'path', { d: 'M' + x + ' 4v11', stroke: '#000' });
                    add(top, 'text', { x: x + 2, y: 11 }, String(n));
                }
                add(top, 'path', { d: 'M' + (x + 12) + ' 13v2', stroke: '#000' });
            }

            const left = document.getElementById('rulerLeft');
            for (let n = 0; n <= 20; n++) {
                const y = Math.round(497 - n * CM) + 0.5;
                if (n > 0) {
                    add(left, 'path', { d: 'M4 ' + y + 'h11', stroke: '#000' });
                    add(left, 'text', { transform: 'translate(11 ' + (y - 2) + ') rotate(-90)' }, String(n));
                }
                add(left, 'path', { d: 'M13 ' + (y - 12) + 'h2', stroke: '#000' });
            }

            // Coordinate labels round the data frame
            const labels = document.getElementById('mapLabels');
            const lon = ['38.480.3', '38.648.8', '38.811.6', '38.979.2', '39.138.8'];
            const lat = ['0.938.1', '0.968.9', '0.908.8', '0.938.4', '0.648.3'];
            [178, 484, 793, 1099, 1408].forEach((x, i) => {
                [41, 1125].forEach(y => {
                    add(labels, 'text', { x: x - 39, y: y, class: 'degree' }, '110');
                    add(labels, 'text', { x: x - 5, y: y - 6, class: 'minute' }, lon[i]);
                });
            });
            [139, 346, 553, 760, 967].forEach((y, i) => {
                [13, 1571].forEach(x => {
                    add(labels, 'text', { transform: 'translate(' + x + ' ' + (y + 31) + ') rotate(-90)', class: 'degree' }, '-7');
                    add(labels, 'text', { transform: 'translate(' + (x - 1) + ' ' + (y + 11) + ') rotate(-90)', class: 'minute' }, lat[i]);
                });
            });
        })();
    </script>
</body>
</html>
```
FILE: styles.css
```
/* Reset and Base Styles */
* {
    margin: 0;
    padding: 0;
    box-sizing: border-box;
}

body {
    font-family: "Open Sans", "Noto Sans", sans-serif;
    font-size: 11px;
    line-height: 18px;
    color: #000;
    background-color: #f0f0f0;
    display: flex;
    flex-direction: column;
    height: 100vh;
    overflow: hidden;
}

button, select, input {
    font: inherit;
    color: inherit;
}

button {
    background: none;
    border: none;
    display: flex;
    align-items: center;
    justify-content: center;
    flex-shrink: 0;
}

h1, h2, h3 {
    font-size: 11px;
    font-weight: normal;
}

svg {
    display: block;
    flex-shrink: 0;
}

.sprite {
    position: absolute;
    width: 0;
    height: 0;
}

.icon {
    width: 16px;
    height: 16px;
}

/* Title and menu */
.title-bar {
    height: 23px;
    padding-left: 2px;
    background-color: #fff;
    display: flex;
    align-items: center;
    gap: 5px;
    flex-shrink: 0;
}

.title-bar h1 {
    font-size: 12px;
}

.window-buttons {
    margin-left: auto;
    padding-right: 2px;
    display: flex;
}

.window-buttons button {
    width: 46px;
    height: 22px;
}

.menu-bar {
    height: 25px;
    padding-left: 12px;
    background: linear-gradient(to right, #f0f0f0, #fafafa);
    display: flex;
    align-items: center;
    gap: 17px;
    flex-shrink: 0;
}

/* Toolbars */
.toolbars {
    background: linear-gradient(to right, #f0f0f0, #fafafa);
    flex-shrink: 0;
}

.toolbar-row {
    height: 26px;
    display: flex;
    align-items: center;
    gap: 9px;
    padding-left: 4px;
}

.georef-row {
    padding-left: 185px;
}

.toolbar {
    height: 26px;
    display: flex;
    align-items: center;
    background: linear-gradient(#fafafa, #eee);
    flex-shrink: 0;
}

.grip {
    width: 6px;
    height: 16px;
    border-left: 3px dotted #c4c4c4;
}

.sep {
    width: 1px;
    height: 16px;
    margin: 0 2px 0 3px;
    background-color: #bdbdbd;
    flex-shrink: 0;
}

.tools .sep {
    margin: 0 2px;
}

.tool {
    width: 22px;
    height: 22px;
}

.tool.active, .drop.active {
    background-color: #dceaf6;
    border: 1px solid #1b7fd4;
}

.tool.pressed, .drop.pressed {
    background-color: #a9d1f2;
}

.drop.pressed {
    border-left: none;
}

.drop {
    width: 11px;
    height: 22px;
}

.drop.wide {
    width: 16px;
}

.drop::before, .text-tool::after {
    content: "";
    border: 3px solid transparent;
    border-top-color: #000;
    border-bottom: none;
}

.drop.gray::before {
    border-top-color: #a0a0a0;
}

.text-tool {
    padding: 0 4px 0 2px;
    gap: 3px;
}

.text-tool.editor {
    width: 202px;
    justify-content: flex-start;
}

.overflow {
    width: 10px;
    height: 26px;
    background: linear-gradient(#f0f0f0, #a8a8a8);
    flex-direction: column;
    justify-content: flex-end;
    gap: 2px;
    padding-bottom: 4px;
}

.overflow::before {
    content: "";
    width: 6px;
    height: 1px;
    background-color: #000;
}

.overflow::after {
    content: "";
    border: 3px solid transparent;
    border-top-color: #000;
    border-bottom: none;
}

.tools .overflow {
    margin-left: 6px;
}

.combo {
    height: 21px;
    padding: 0 14px 0 3px;
    border: 1px solid #7a7a7a;
    border-radius: 0;
    appearance: none;
    background: #fff url("data:image/svg+xml,%3Csvg xmlns='http://www.w3.org/2000/svg' width='9' height='6'%3E%3Cpath d='M.5 1l4 4 4-4' fill='none' stroke='%23555'/%3E%3C/svg%3E") no-repeat right 4px center;
}

.scale {
    width: 148px;
}

.size {
    width: 46px;
    margin-right: 1px;
}

.percent {
    width: 60px;
    background-image: none;
    padding-left: 2px;
}

.raster {
    width: 180px;
    background-color: #e1e1e1;
    border-color: #adadad;
}

.font-box {
    display: flex;
    align-items: center;
    width: 171px;
    height: 21px;
    padding-left: 2px;
    background-color: #fff;
    border: 1px solid #7a7a7a;
    border-right: none;
}

.font-box .combo {
    flex: 1;
    height: 19px;
    border: none;
}

.serif, .letter, .color {
    font-family: "Liberation Serif", serif;
    font-weight: bold;
    font-size: 14px;
}

.serif {
    font-size: 18px;
}

.italic {
    font-style: italic;
}

.underline {
    text-decoration: underline;
}

.color {
    border-bottom: 3px solid #000;
    width: 18px;
    height: 18px;
    margin: 0 2px;
    line-height: 14px;
}

.color.yellow {
    border-color: #ffffb4;
}

.color.green {
    border-color: #4cf000;
}

.angle {
    width: 75px;
    height: 18px;
    margin: 0 5px 0 3px;
    border: 1px solid #555;
    background-color: #fff;
}

.page use + use {
    transform: translate(2px, 3px) scale(0.75);
}

/* Workspace */
.workspace {
    flex: 1;
    min-height: 0;
    display: flex;
}

.panel-title {
    height: 20px;
    padding: 0 1px 0 4px;
    display: flex;
    align-items: center;
    background: linear-gradient(to right, #bfcddb, #d7e4f2);
    flex-shrink: 0;
}

.panel-title h2 {
    flex: 1;
}

.panel-title button {
    width: 15px;
    height: 18px;
}

.panel-tools {
    height: 25px;
    padding-left: 4px;
    display: flex;
    align-items: center;
    background: linear-gradient(#fafafa, #f2f2f2);
    flex-shrink: 0;
}

/* Table of contents */
.toc {
    width: 199px;
    margin-bottom: 2px;
    display: flex;
    flex-direction: column;
    flex-shrink: 0;
}

.tree-box {
    flex: 1;
    min-height: 0;
    padding: 2px 1px 1px;
    border: 1px solid #828790;
    background-color: #fff;
    display: flex;
    flex-direction: column;
}

.tree {
    flex: 1;
    overflow: hidden;
    list-style: none;
}

.tree li {
    height: 18px;
    display: flex;
    align-items: center;
    white-space: nowrap;
}

.tree .level-0 {
    padding-left: 7px;
}

.tree .level-1 {
    padding-left: 26px;
}

.tree .level-2 {
    padding-left: 45px;
}

.tree .level-3 {
    padding-left: 77px;
}

.tree .level-4 {
    padding-left: 100px;
}

.tree .icon {
    margin-right: 4px;
}

.minus {
    width: 9px;
    height: 9px;
    margin-right: 7px;
    border: 1px solid #919191;
    border-radius: 1px;
    background-color: #f4f4f4;
}

.minus::before {
    content: "";
    width: 5px;
    height: 1px;
    background-color: #3552a8;
}

.tree input {
    appearance: none;
    width: 11px;
    height: 11px;
    margin: 0 8px 0 1px;
    border: 1px solid #000;
    background-color: #fff;
}

.tree input:checked {
    background-image: url("data:image/svg+xml,%3Csvg xmlns='http://www.w3.org/2000/svg' width='9' height='9'%3E%3Cpath d='M1 4l2.500 3L8 1.500' fill='none' stroke='%23000' stroke-width='2'/%3E%3C/svg%3E");
}

.line-symbol {
    width: 16px;
    height: 3px;
    background-color: #e60000;
    border-radius: 1px;
}

.swatch {
    width: 15px;
    height: 11px;
    margin-right: 3px;
    border: 1px solid #6e6e6e;
    flex-shrink: 0;
}

.band {
    width: 36px;
}

.swatch.other { background-color: #c9dcf5; }
.swatch.blank { background-color: #abc974; }
.swatch.gudang { background-color: #686868; }
.swatch.jalan { background-color: #e60000; }
.swatch.lahan { background-color: #599960; }
.swatch.pabrik { background-color: #343434; }
.swatch.pemukiman { background-color: #a83800; }
.swatch.rth { background-color: #38a800; }
.swatch.sawah { background-color: #267300; }
.swatch.sekolah { background-color: #a8a800; }
.swatch.red { background-color: #f00; }
.swatch.lime { background-color: #0f0; }
.swatch.blue { background-color: #00f; }

/* Scroll bars */
.h-scroll {
    display: flex;
    height: 15px;
    background-color: #f0f0f0;
    flex-shrink: 0;
}

.h-scroll button {
    width: 16px;
}

.track {
    flex: 1;
    display: flex;
}

.thumb {
    background-color: #cdcdcd;
}

.toc .thumb {
    width: 63%;
}

/* Layout view */
.layout-view {
    flex: 1;
    min-width: 0;
    margin: 0 5px 2px;
    border: 1px solid #808080;
    border-right-color: #e3e3e3;
    border-bottom-color: #e3e3e3;
    display: grid;
    grid-template-columns: 21px 1fr 16px;
    grid-template-rows: 20px 1fr 16px;
}

.ruler-top {
    grid-column: 1 / 3;
    padding: 3px 0 0 111px;
}

.ruler-left {
    grid-column: 1;
    padding: 27px 0 0 3px;
}

.ruler-top svg, .ruler-left svg {
    border: 1px solid #a0a0a0;
    background-color: #fff;
    font-family: "Liberation Sans", Arial, sans-serif;
    font-size: 12px;
}

.canvas {
    border: 1px solid #696969;
    border-width: 1px 0 0 1px;
    background-color: #fff;
    overflow: hidden;
    padding: 26px 0 0 89px;
}

.paper {
    width: 705px;
    height: 499px;
    padding: 115px 0 0 3px;
    border: 1px dotted #000;
    background-color: #fff;
    box-shadow: 3px 3px 0 #808080;
}

.map {
    width: 530px;
    height: 380px;
    font-family: "Liberation Sans", Arial, sans-serif;
}

.pemukiman { fill: #a83800; }
.pabrik { fill: #343434; }
.sawah { fill: #267300; }
.rth { fill: #38a800; }
.lahan { fill: #599960; }
.sekolah { fill: #a8a800; }
.gudang { fill: #686868; }
.jalan { fill: #e60000; }

.graticule {
    fill: none;
    stroke: #6e6e6e;
    stroke-width: 3px;
}

.degree {
    font-size: 18px;
    font-weight: bold;
}

.minute {
    font-size: 11px;
    fill: #b4b4b4;
}

.v-scroll {
    grid-row: 1 / 3;
    grid-column: 3;
    display: flex;
    flex-direction: column;
    padding: 2px 1px 1px 0;
    border-left: 1px solid #fff;
}

.v-scroll button {
    height: 16px;
}

.v-scroll .track {
    flex-direction: column;
    justify-content: center;
}

.v-scroll .thumb {
    height: 58%;
}

.view-bar {
    grid-column: 1 / 4;
    display: flex;
    align-items: center;
}

.view {
    width: 17px;
    height: 16px;
}

.view.active {
    background-color: #c5dff5;
    border: 1px solid #90c0ea;
}

.view-bar .sep {
    margin-right: 4px;
}

.view-bar .h-scroll {
    flex: 1;
    padding-right: 16px;
}

.view-bar .track {
    justify-content: center;
}

.view-bar .thumb {
    width: 66%;
}

/* Create features */
.features {
    width: 211px;
    display: flex;
    flex-direction: column;
    flex-shrink: 0;
    color: #6d6d6d;
}

.features .panel-title {
    color: #000;
}

.template-search {
    width: 106px;
    margin-right: 1px;
    background-color: #f0f0f0;
    border-color: #a0a0a0;
    color: #6d6d6d;
}

.template-box {
    flex: 1;
    padding-top: 8px;
    border: 1px solid #828790;
    text-align: center;
}

.splitter {
    height: 14px;
    display: flex;
    align-items: center;
    gap: 1px;
    padding: 0 1px 0 24px;
}

.splitter hr {
    width: 70px;
    margin: 0 auto;
    border: none;
    border-top: 1px solid #a0a0a0;
}

.splitter button {
    width: 11px;
    height: 11px;
    border: 1px solid #000;
}

.construction {
    height: 100px;
    border: 1px solid #a0a0a0;
    border-width: 1px 0 0 1px;
    padding-top: 5px;
}

.construction h3 {
    display: flex;
    align-items: center;
    gap: 1px;
    font-weight: bold;
}

.construction p {
    margin-top: 11px;
    text-align: center;
}

.dock {
    width: 23px;
    padding: 1px 0 0 2px;
    background-color: #fafafa;
    flex-shrink: 0;
}

.dock button {
    width: 22px;
    height: 68px;
    padding-top: 4px;
    flex-direction: column;
    justify-content: flex-start;
    gap: 3px;
    border: 1px solid #8e8e8e;
    border-radius: 3px 0 0 3px;
    color: #555;
}

.dock span {
    writing-mode: vertical-rl;
    font-size: 12px;
}

/* Status bar and taskbar */
.status-bar {
    height: 19px;
    display: flex;
    flex-shrink: 0;
    border-top: 1px solid #f8f8f8;
}

.message {
    flex: 1;
    border-right: 1px solid #fafafa;
}

.position {
    width: 257px;
    padding-left: 4px;
}

.taskbar {
    height: 32px;
    display: flex;
    flex-shrink: 0;
    background: linear-gradient(to right, #cfcfcf, #dadada);
}

.taskbar > button {
    width: 36px;
    padding-bottom: 1px;
}

.taskbar > .running {
    width: 28px;
    margin: 0 4px 0 7px;
    padding: 0;
    border-bottom: 2px solid #555;
}

.taskbar > .running ~ button {
    width: 37px;
}

.taskbar > .current {
    padding: 0;
    background-color: #efefef;
    border-bottom: 2px solid #444;
}

.ai span {
    width: 16px;
    height: 16px;
    line-height: 14px;
    background-color: #321f0a;
    border: 1px solid #f39a1c;
    color: #f8a02c;
    font-size: 10px;
    font-weight: bold;
}

.tray {
    margin-left: auto;
    padding-right: 4px;
    display: flex;
    align-items: center;
}

.tray button {
    width: 24px;
}

.tray .help {
    width: 32px;
}

.clock {
    width: 68px;
    line-height: 15px;
    text-align: center;
}

.clock span {
    display: block;
}

.tray .notify {
    width: 50px;
    height: 32px;
    padding-right: 8px;
    border-right: 1px solid #aaa;
}

/* Tooltip */
.tooltip {
    position: absolute;
    left: 774px;
    top: 83px;
    width: 208px;
    height: 87px;
    padding: 6px 4px;
    line-height: 15px;
    color: #575757;
    background: linear-gradient(#fff, #c9d8ef);
    border: 1px solid #767676;
    border-radius: 2px;
    box-shadow: 3px 3px 3px rgba(0,0,0,0.4);
}

.tooltip p {
    margin: 9px 8px 0;
}
```
